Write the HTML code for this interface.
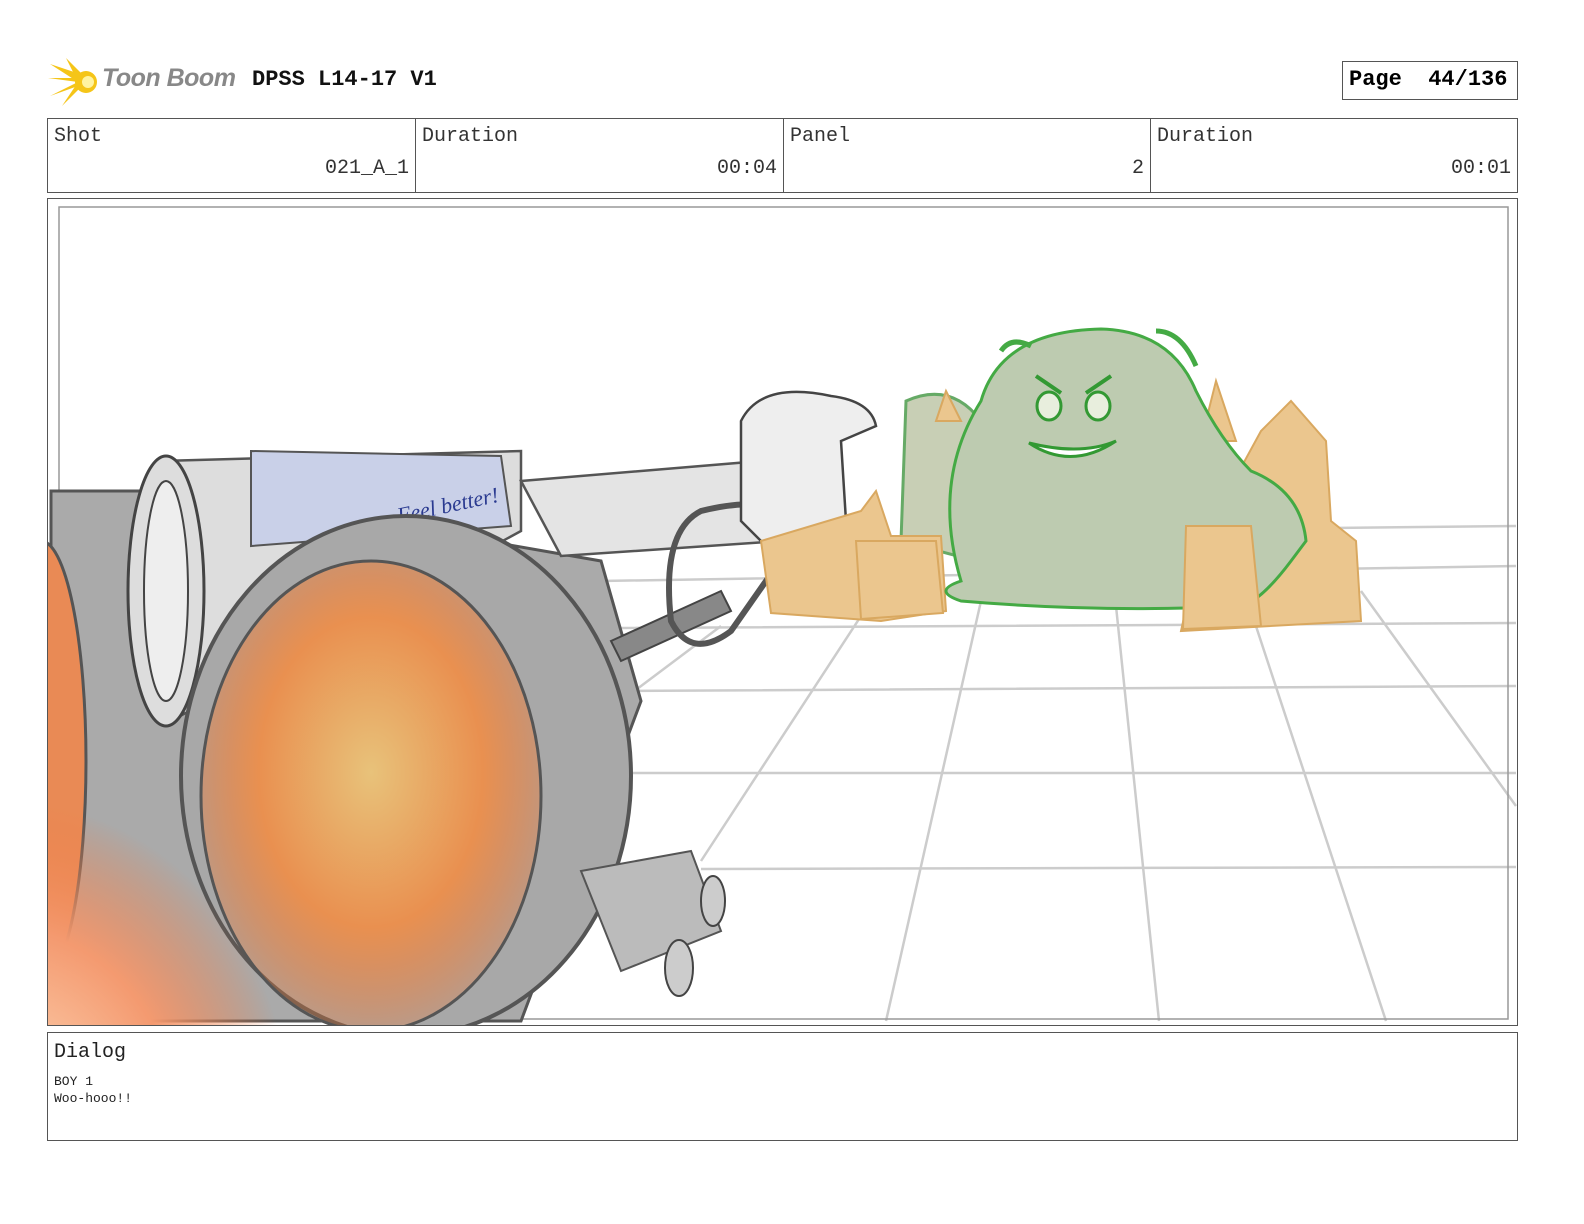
<!DOCTYPE html>
<html><head><meta charset="utf-8"><style>
body{margin:0;width:1584px;height:1224px;background:#fff;position:relative;overflow:hidden;font-family:"Liberation Mono",monospace;}
.a{position:absolute}
.cell{position:absolute;top:118px;height:75px;border:1px solid #555;box-sizing:border-box;font-size:20px;color:#333}
.cell .l{position:absolute;left:6px;top:6px}
.cell .v{position:absolute;right:6px;top:38px}
</style></head><body>
<svg class="a" style="left:48px;top:56px" width="52" height="52" viewBox="0 0 52 52">
<g fill="#f5c518"><path d="M30 26 L2 8 L32 18Z"/><path d="M30 26 L0 22 L30 22Z"/><path d="M30 26 L2 40 L30 30Z"/><path d="M30 26 L14 50 L34 30Z"/><path d="M30 26 L18 2 L36 20Z"/><circle cx="38" cy="26" r="11"/></g><circle cx="40" cy="26" r="6" fill="#fff3a0"/></svg>
<div class="a" style="left:102px;top:64px;font:italic bold 25px 'Liberation Sans',sans-serif;color:#888;letter-spacing:-0.5px">Toon Boom</div>
<div class="a" style="left:252px;top:67px;font:bold 22px 'Liberation Mono',monospace;color:#111">DPSS L14-17 V1</div>
<div class="a" style="left:1342px;top:61px;width:176px;height:39px;border:1px solid #555;box-sizing:border-box;font:bold 22px 'Liberation Mono',monospace;padding:5px 0 0 6px">Page&nbsp; 44/136</div>
<div class="cell" style="left:47px;width:369px"><span class="l">Shot</span><span class="v">021_A_1</span></div>
<div class="cell" style="left:415px;width:369px"><span class="l">Duration</span><span class="v">00:04</span></div>
<div class="cell" style="left:783px;width:368px"><span class="l">Panel</span><span class="v">2</span></div>
<div class="cell" style="left:1150px;width:368px"><span class="l">Duration</span><span class="v">00:01</span></div>
<div class="a" style="left:47px;top:198px;width:1471px;height:828px;border:1px solid #555;box-sizing:border-box;overflow:hidden">
<svg width="1471" height="828" viewBox="47 198 1471 828" style="display:block">
<defs><radialGradient id="f" cx="0.5" cy="0.45" r="0.55"><stop offset="0" stop-color="#e8c27a"/><stop offset="0.6" stop-color="#e99050"/><stop offset="1" stop-color="#e97a3a" stop-opacity="0.3"/></radialGradient>
<radialGradient id="f2" cx="0.2" cy="0.85" r="0.8"><stop offset="0" stop-color="#ffe0c0"/><stop offset="0.6" stop-color="#f49a70"/><stop offset="1" stop-color="#f07a40" stop-opacity="0"/></radialGradient></defs>
<g stroke="#ccc" stroke-width="2.5" fill="none">
<path d="M600 580 L1515 565 M620 627 L1515 622 M620 690 L1515 685 M620 772 L1515 772 M700 868 L1515 866 M1330 527 L1515 525"/>
<path d="M980 600 L885 1020 M1115 605 L1158 1020 M1250 610 L1385 1020 M1360 590 L1515 805 M860 615 L700 860 M720 625 L620 700"/>
</g>
<rect x="58" y="206" width="1449" height="812" fill="none" stroke="#999" stroke-width="1.5"/>
<path d="M50 490 L200 490 L600 560 L640 700 L520 1020 L50 1020Z" fill="#aaa" stroke="#555" stroke-width="3"/>
<ellipse cx="40" cy="760" rx="45" ry="220" fill="#e98a55" stroke="#555" stroke-width="3"/>
<path d="M160 460 L520 450 L520 530 L170 720Z" fill="#ddd" stroke="#555" stroke-width="2.5"/>
<ellipse cx="165" cy="590" rx="38" ry="135" fill="#ddd" stroke="#444" stroke-width="3"/>
<ellipse cx="165" cy="590" rx="22" ry="110" fill="#eee" stroke="#444" stroke-width="2"/>
<path d="M250 450 L500 455 L510 525 L250 545Z" fill="#c9d0e8" stroke="#555" stroke-width="2"/>
<text x="395" y="515" font-family="Liberation Serif,serif" font-style="italic" font-size="22" fill="#2a3a90" transform="rotate(-12 430 505)">Feel better!</text>
<path d="M520 480 L760 460 L780 540 L560 555Z" fill="#e4e4e4" stroke="#555" stroke-width="2.5"/>
<path d="M610 640 L720 590 L730 610 L620 660Z" fill="#888" stroke="#444" stroke-width="2"/>
<path d="M700 510 Q660 530 670 620 Q690 660 730 630 L800 530 Q780 490 700 510Z" fill="none" stroke="#555" stroke-width="6"/>
<path d="M740 420 Q760 380 830 395 Q870 400 875 425 L840 440 L845 520 L780 560 L740 520Z" fill="#eee" stroke="#444" stroke-width="2.5"/>
<ellipse cx="405" cy="775" rx="225" ry="260" fill="#a8a8a8" stroke="#555" stroke-width="4"/>
<ellipse cx="370" cy="795" rx="170" ry="235" fill="url(#f)" stroke="#555" stroke-width="3"/>
<ellipse cx="110" cy="980" rx="180" ry="200" fill="url(#f2)"/>
<path d="M580 870 L690 850 L720 930 L620 970Z" fill="#bbb" stroke="#555" stroke-width="2"/>
<ellipse cx="712" cy="900" rx="12" ry="25" fill="#ccc" stroke="#444" stroke-width="2"/>
<ellipse cx="678" cy="967" rx="14" ry="28" fill="#ccc" stroke="#444" stroke-width="2"/>
<path d="M905 400 Q950 380 980 420 L975 560 L900 540Z" fill="#c8cfb5" stroke="#6a6" stroke-width="3"/>
<g fill="#ebc68e" stroke="#d9a860" stroke-width="2">
<path d="M760 540 L860 510 L875 490 L890 535 L940 535 L945 610 L880 620 L770 612Z"/>
<path d="M1200 540 L1260 430 L1290 400 L1325 440 L1330 520 L1355 540 L1360 620 L1180 630Z"/>
<path d="M1215 380 L1235 440 L1200 440Z"/><path d="M945 390 L960 420 L935 420Z"/>
</g>
<path d="M960 580 Q930 480 980 400 Q1000 330 1100 328 Q1170 330 1195 390 Q1220 440 1250 470 Q1300 490 1305 540 L1290 560 Q1260 600 1240 605 Q1100 612 960 600 Q930 590 960 580Z" fill="#bdcbb0" stroke="#4a4" stroke-width="3"/>
<path d="M1000 350 Q1010 335 1030 345 M1155 330 Q1180 330 1195 365" stroke="#4a4" stroke-width="5" fill="none"/>
<path d="M1035 375 L1060 392 M1110 375 L1085 392" stroke="#393" stroke-width="4"/>
<ellipse cx="1048" cy="405" rx="12" ry="14" fill="#e8eedd" stroke="#393" stroke-width="3"/>
<ellipse cx="1097" cy="405" rx="12" ry="14" fill="#e8eedd" stroke="#393" stroke-width="3"/>
<path d="M1028 442 Q1070 470 1115 440 Q1080 455 1028 442Z" fill="#fff" stroke="#393" stroke-width="3"/>
<g fill="#ebc68e" stroke="#d9a860" stroke-width="2">
<path d="M855 540 L935 540 L942 612 L860 618Z"/>
<path d="M1185 525 L1250 525 L1260 625 L1182 628Z"/>
</g>
</svg></div>
<div class="a" style="left:47px;top:1032px;width:1471px;height:109px;border:1px solid #555;box-sizing:border-box">
<div class="a" style="left:6px;top:8px;font-size:20px;color:#222">Dialog</div>
<div class="a" style="left:6px;top:40px;font-size:13px;line-height:17px;color:#222">BOY 1<br>Woo-hooo!!</div>
</div>
</body></html>
